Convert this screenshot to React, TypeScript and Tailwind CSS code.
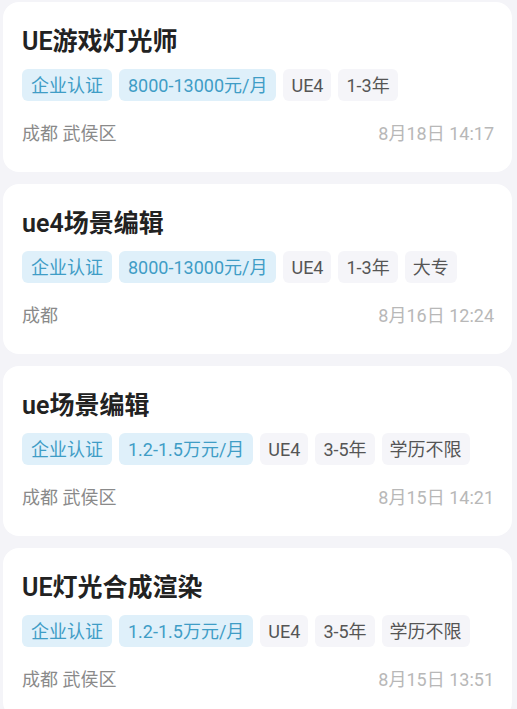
// App.tsx — job list cards
interface Job {
  title: string;
  salary: string;
  tags: string[];
  location: string;
  time: string;
}

const jobs: Job[] = [
  { title: 'UE游戏灯光师', salary: '8000-13000元/月', tags: ['UE4', '1-3年'], location: '成都 武侯区', time: '8月18日 14:17' },
  { title: 'ue4场景编辑', salary: '8000-13000元/月', tags: ['UE4', '1-3年', '大专'], location: '成都', time: '8月16日 12:24' },
  { title: 'ue场景编辑', salary: '1.2-1.5万元/月', tags: ['UE4', '3-5年', '学历不限'], location: '成都 武侯区', time: '8月15日 14:21' },
  { title: 'UE灯光合成渲染', salary: '1.2-1.5万元/月', tags: ['UE4', '3-5年', '学历不限'], location: '成都 武侯区', time: '8月15日 13:51' },
];

const JobCard = ({ job }: { job: Job }) => (
  <div className="bg-white rounded-[16px] pt-[24px] pb-[27px] pl-[19px] pr-[18px]">
    <h2 className="text-[25px] leading-[32px] font-semibold text-[#222]">{job.title}</h2>
    <div className="flex gap-[7px] mt-[11px]">
      <span className="h-[32px] px-[9px] flex items-center rounded-[6px] bg-[#dff0fa] text-[#3f9dc6] text-[18px]">企业认证</span>
      <span className="h-[32px] px-[9px] flex items-center rounded-[6px] bg-[#dff0fa] text-[#3f9dc6] text-[18px]">{job.salary}</span>
      {job.tags.map((t) => (
        <span key={t} className="h-[32px] px-[8px] flex items-center rounded-[6px] bg-[#f5f5f9] text-[#555] text-[18px]">
          {t}
        </span>
      ))}
    </div>
    <div className="flex justify-between items-center mt-[20px] h-[24px] text-[18px]">
      <span className="text-[#8a8a8a]">{job.location}</span>
      <span className="text-[#b8b8b8]">{job.time}</span>
    </div>
  </div>
);

export default function App() {
  return (
    <div
      className="bg-[#f4f4f8] pt-[2px] pl-[3px] pr-[5px] flex flex-col gap-[12px] overflow-hidden h-[709px]"
      style={{ fontFamily: 'Roboto, "Noto Sans CJK SC", sans-serif' }}
    >
      {jobs.map((job, i) => (
        <JobCard key={i} job={job} />
      ))}
    </div>
  );
}
